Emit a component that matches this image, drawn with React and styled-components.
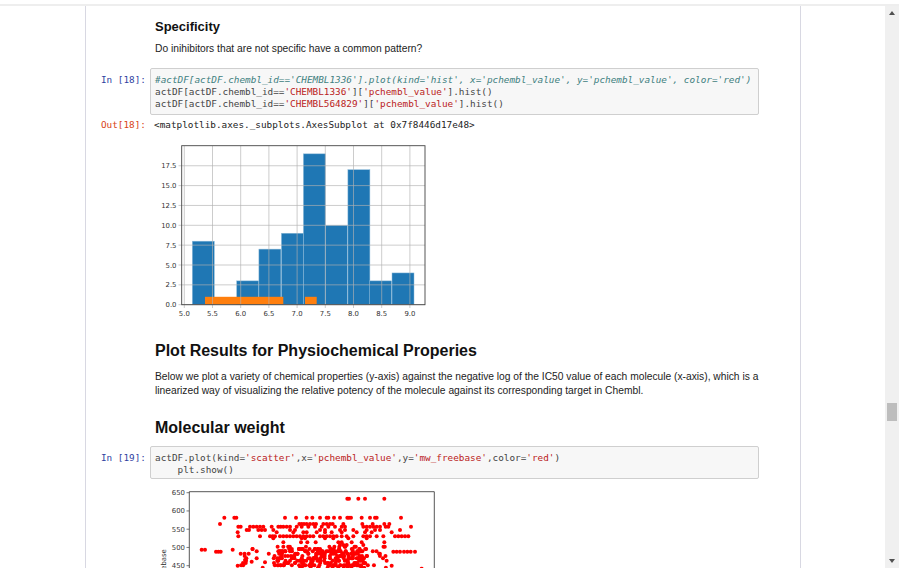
import React from "react";
import styled, {createGlobalStyle} from "styled-components";

const GlobalStyle = createGlobalStyle`
  html, body {
    margin: 0;
    height: 100%;
    overflow: hidden;
    background: #ffffff;
  }
`;

const histBars = [[192.3, 8], [214.5, 0], [236.7, 3], [258.9, 7], [281.4, 9], [303.4, 19], [325.4, 10], [347.9, 17], [369.6, 3], [392, 4]];
const xTicks = ["5.0", "5.5", "6.0", "6.5", "7.0", "7.5", "8.0", "8.5", "9.0"];
const yTicks = ["0.0", "2.5", "5.0", "7.5", "10.0", "12.5", "15.0", "17.5"];

// dot rows read off the plot, coordinates are 3x the crop
const dotRows = [
    [56, [592, 597, 625, 645, 703]],
    [113, [223, 253, 259, 405, 438, 470, 487, 510, 530, 535, 552, 570, 592, 597, 603, 635, 660, 675, 680, 753]],
    [132, [210, 448, 455, 462, 470, 480, 490, 498, 520, 530, 540, 548, 580, 637, 668, 703, 718]],
    [140, [265, 272, 300, 310, 320, 330, 340, 365, 385, 392, 400, 410, 420, 440, 455, 475, 495, 515, 535, 555, 575, 585, 640, 650, 660, 670, 680, 690, 707, 715, 783]],
    [150, [290, 297, 325, 335, 345, 370, 420, 435, 510, 525, 570, 585, 610, 650, 675, 690, 750]],
    [157, [263, 380, 430, 460, 470, 500, 525, 545, 575, 620, 645, 665, 725]],
    [169, [265, 330, 360, 368, 375, 390, 400, 410, 420, 430, 440, 450, 460, 470, 480, 490, 510, 520, 530, 540, 550, 560, 575, 590, 610, 640, 650, 660, 680, 700, 735, 745, 755, 765, 775]],
    [175, [370, 455, 465, 525, 550, 595, 650]],
    [187, [400, 453, 472, 497, 565, 575, 605, 635, 703]],
    [195, [570, 580, 590, 640]],
    [209, [155, 165, 248]],
    [215, [198, 205, 212, 730, 740, 750, 762, 772, 782, 795]],
];

function lowerDots() {
    const dots = [];
    let seed = 18;
    const rand = () => {
        seed = (seed * 16807) % 2147483647;
        return seed / 2147483647;
    };
    for (let i = 0; i < 300; i++) {
        const wide = i % 4 === 0;
        const x = wide ? 272 + rand() * 440 : 380 + rand() * 270;
        dots.push([x, 200 + Math.round(rand() * 9) * 7]);
    }
    return dots;
}

const scatterDots = [
    ...dotRows.flatMap(([y, xs]) => xs.map((x) => [x, y])),
    ...lowerDots(),
    [263, 257], [285, 240], [305, 245], [320, 235], [345, 247], [815, 266], [725, 257],
];

const Histogram = () => (
    <ChartSvg width="290" height="182" viewBox="150 140 290 182">
        <rect x="182" y="146" width="243" height="159" fill="#fff"/>
        {histBars.map(([x, v]) => v > 0 &&
            <rect key={x} x={x} y={304.7 - v * 7.94} width="22" height={v * 7.94} fill="#1f77b4" stroke="#8fbbd9" strokeWidth="0.5"/>)}
        <rect x="205" y="296.8" width="78.3" height="7.9" fill="#ff7f0e"/>
        <rect x="305" y="296.8" width="11.7" height="7.9" fill="#ff7f0e"/>
        {xTicks.map((t, i) => (
            <g key={t}>
                <line x1={184.3 + i * 28.2} x2={184.3 + i * 28.2} y1="146" y2="308" stroke="#b0b0b0" strokeOpacity="0.65" strokeWidth="1"/>
                <TickText x={184.3 + i * 28.2} y="316" textAnchor="middle">{t}</TickText>
            </g>
        ))}
        {yTicks.map((t, i) => (
            <g key={t}>
                <line x1="178.5" x2="425" y1={304.7 - i * 19.85} y2={304.7 - i * 19.85} stroke="#b0b0b0" strokeOpacity="0.65" strokeWidth="1"/>
                <TickText x="176.5" y={307.2 - i * 19.85} textAnchor="end">{t}</TickText>
            </g>
        ))}
        <rect x="181.7" y="145.7" width="243.3" height="159" fill="none" stroke="#444" strokeWidth="0.9"/>
    </ChartSvg>
);

const Scatter = () => (
    <ChartSvg $tight width="290" height="88" viewBox="150 480 290 88">
        {scatterDots.map(([x, y], i) => (
            <circle key={i} cx={150 + x / 3} cy={480 + y / 3} r="2" fill="#ff0000"/>
        ))}
        {["650", "600", "550", "500", "450"].map((t, i) => (
            <g key={t}>
                <line x1="186.5" x2="189.3" y1={492.7 + i * 18.25} y2={492.7 + i * 18.25} stroke="#444" strokeWidth="0.7"/>
                <TickText x="185" y={495.2 + i * 18.25} textAnchor="end">{t}</TickText>
            </g>
        ))}
        <path d="M189.3 580V491.7H434.3V580" fill="none" stroke="#444" strokeWidth="0.9"/>
        <TickText transform="translate(166 595) rotate(-90)" x="0" y="0">mw_freebase</TickText>
    </ChartSvg>
);

const Str = ({children}) => <StringToken>{children}</StringToken>;

const App = () => (
    <Page>
        <GlobalStyle/>
        <TopLine/>
        <Body>
            <Gutter/>
            <Notebook>
                <Markdown>
                    <SmallHeading>Specificity</SmallHeading>
                    <Paragraph>Do inihibitors that are not specific have a common pattern?</Paragraph>
                </Markdown>
                <Cell>
                    <Prompt>In [18]:</Prompt>
                    <CodeBox>
                        <Comment>#actDF[actDF.chembl_id=='CHEMBL1336'].plot(kind='hist', x='pchembl_value', y='pchembl_value', color='red')</Comment>{"\n"}
                        actDF[actDF.chembl_id==<Str>'CHEMBL1336'</Str>][<Str>'pchembl_value'</Str>].hist(){"\n"}
                        actDF[actDF.chembl_id==<Str>'CHEMBL564829'</Str>][<Str>'pchembl_value'</Str>].hist()
                    </CodeBox>
                </Cell>
                <Output>
                    <Prompt $out>Out[18]:</Prompt>
                    <OutputText>&lt;matplotlib.axes._subplots.AxesSubplot at 0x7f8446d17e48&gt;</OutputText>
                </Output>
                <Histogram/>
                <Markdown $section>
                    <LargeHeading>Plot Results for Physiochemical Properies</LargeHeading>
                    <Paragraph>Below we plot a variety of chemical properties (y-axis) against the negative log of the IC50 value of each molecule (x-axis), which is a linearized way of visualizing the relative potency of the molecule against its corresponding target in Chembl.</Paragraph>
                    <LargeHeading $second>Molecular weight</LargeHeading>
                </Markdown>
                <Cell $second>
                    <Prompt>In [19]:</Prompt>
                    <CodeBox $short>
                        actDF.plot(kind=<Str>'scatter'</Str>,x=<Str>'pchembl_value'</Str>,y=<Str>'mw_freebase'</Str>,color=<Str>'red'</Str>){"\n"}
                        {"    "}plt.show()
                    </CodeBox>
                </Cell>
                <Scatter/>
            </Notebook>
            <Gutter $right/>
            <ScrollTrack>
                <ArrowUp/>
                <Thumb/>
                <ArrowDown/>
            </ScrollTrack>
        </Body>
    </Page>
);

const Page = styled.div`
  height: 568px;
  overflow: hidden;
  display: flex;
  flex-direction: column;
  font-family: "Liberation Sans", Arial, sans-serif;
  color: #111;
`;
const TopLine = styled.div`
  height: 4px;
  border-bottom: 2px solid #eeeeee;
  flex: none;
`;
const Body = styled.div`
  flex: 1;
  display: flex;
  min-height: 0;
`;
const Gutter = styled.div`
  width: ${(p) => (p.$right ? "84px" : "85px")};
  flex: none;
`;
const Notebook = styled.div`
  width: 714px;
  flex: none;
  overflow: hidden;
  border-left: 1px solid #d8d8e2;
  border-right: 1px solid #d8d8e2;
`;
const Markdown = styled.div`
  padding: ${(p) => (p.$section ? "19px" : "0")} 41px 0 69px;
`;
const SmallHeading = styled.h4`
  margin: 0 0 7px;
  padding-top: 12px;
  font-size: 13px;
  line-height: 17px;
  font-weight: bold;
`;
const LargeHeading = styled.h3`
  margin: ${(p) => (p.$second ? "20px 0 8px" : "0 0 9px")};
  font-size: 16px;
  line-height: 20px;
  font-weight: bold;
`;
const Paragraph = styled.p`
  margin: 0;
  font-size: 10.25px;
  line-height: 14px;
  color: #1c1c1c;
`;
const Cell = styled.div`
  display: flex;
  margin-top: ${(p) => (p.$second ? "0" : "12px")};
  padding-right: 41px;
`;
const Prompt = styled.div`
  width: 60px;
  flex: none;
  padding-top: ${(p) => (p.$out ? "0" : "6px")};
  padding-right: 4px;
  text-align: right;
  font-family: "DejaVu Sans Mono", monospace;
  font-size: 9.35px;
  line-height: 12.2px;
  color: ${(p) => (p.$out ? "#d84315" : "#303f9f")};
  white-space: pre;
`;
const CodeBox = styled.pre`
  margin: 0;
  flex: 1;
  padding: 5px 4px ${(p) => (p.$short ? "1px" : "3.4px")} 4px;
  background: #f7f7f7;
  border: 1px solid #cfcfcf;
  border-radius: 2px;
  font-family: "DejaVu Sans Mono", monospace;
  font-size: 9.35px;
  line-height: 12.2px;
  color: #444;
  white-space: pre;
  overflow: hidden;
`;
const Comment = styled.span`
  color: #408080;
  font-style: italic;
`;
const StringToken = styled.span`
  color: #ba2121;
`;
const Output = styled.div`
  display: flex;
  margin-top: 4px;
`;
const OutputText = styled.pre`
  margin: 0;
  padding-left: 4px;
  font-family: "DejaVu Sans Mono", monospace;
  font-size: 9.35px;
  line-height: 12.2px;
  color: #222;
`;
const ChartSvg = styled.svg`
  display: block;
  margin: ${(p) => (p.$tight ? "1px" : "9px")} 0 0 64px;
`;
const TickText = styled.text`
  font-family: "DejaVu Sans", sans-serif;
  font-size: 6.9px;
  fill: #333;
`;
const ScrollTrack = styled.div`
  width: 14px;
  flex: none;
  background: #f0f0f0;
  display: flex;
  flex-direction: column;
  align-items: center;
  padding-top: 5px;
`;
const ArrowUp = styled.div`
  width: 0;
  height: 0;
  border-left: 3px solid transparent;
  border-right: 3px solid transparent;
  border-bottom: 4px solid #505050;
`;
const Thumb = styled.div`
  width: 10px;
  height: 18px;
  margin-top: 388px;
  background: #bdbdbd;
`;
const ArrowDown = styled.div`
  width: 0;
  height: 0;
  margin-top: 138px;
  border-left: 3px solid transparent;
  border-right: 3px solid transparent;
  border-top: 4px solid #505050;
`;

export default App;
